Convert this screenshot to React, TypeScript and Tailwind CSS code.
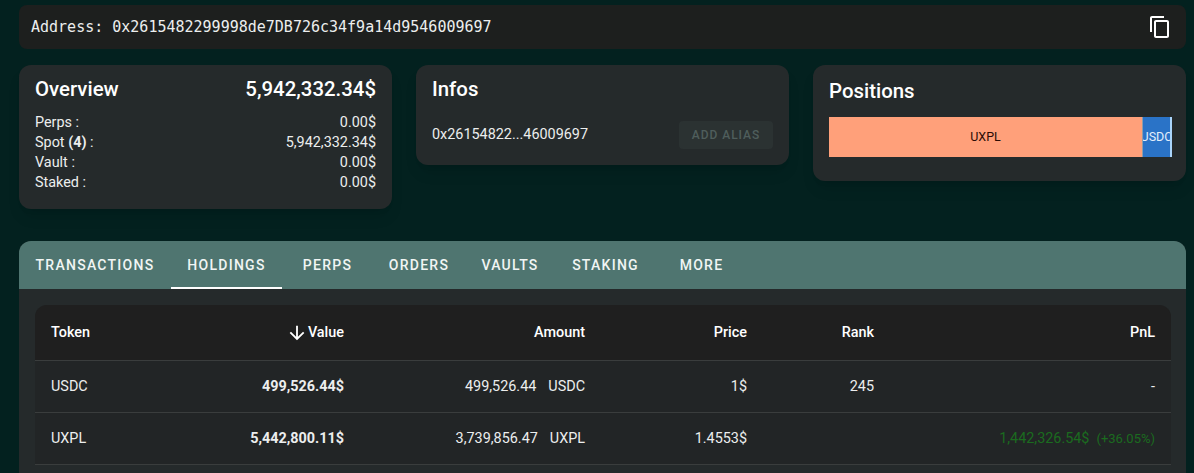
const cols = 'grid grid-cols-[120px_205px_241px_162px_127px_281px]';

const tabs = [
  { label: 'TRANSACTIONS', cls: 'w-[152px]' },
  { label: 'HOLDINGS', cls: 'w-[111px]' },
  { label: 'PERPS', cls: 'w-[91px]' },
  { label: 'ORDERS', cls: 'w-[92px]' },
  { label: 'VAULTS', cls: 'w-[90px]' },
  { label: 'STAKING', cls: 'w-[101px]' },
  { label: 'MORE', cls: 'w-[91px]' },
];

const overviewRows = [
  { id: 'perps', label: <>Perps :</>, value: '0.00$' },
  { id: 'spot', label: <>Spot <b className="font-bold">(4)</b> :</>, value: '5,942,332.34$' },
  { id: 'vault', label: <>Vault :</>, value: '0.00$' },
  { id: 'staked', label: <>Staked :</>, value: '0.00$' },
];

const CopyIcon = () => (
  <svg viewBox="0 0 24 24" className="w-6 h-6 fill-white">
    <path d="M16 1H4c-1.1 0-2 .9-2 2v14h2V3h12V1zm3 4H8c-1.1 0-2 .9-2 2v14c0 1.1.9 2 2 2h11c1.1 0 2-.9 2-2V7c0-1.1-.9-2-2-2zm0 16H8V7h11v14z" />
  </svg>
);

const ArrowDown = () => (
  <svg viewBox="0 0 24 24" className="w-[22px] h-[22px] fill-white">
    <path d="M20 12l-1.41-1.41L13 16.17V4h-2v12.17l-5.58-5.59L4 12l8 8 8-8z" />
  </svg>
);

const Th = ({ children }: { children: React.ReactNode }) => (
  <div className="px-4 flex items-center justify-end text-[14.4px] font-medium text-white">{children}</div>
);

const Td = ({ children, bold }: { children?: React.ReactNode; bold?: boolean }) => (
  <div className={`px-4 flex items-center justify-end text-[14.4px] text-[#eceeee] ${bold ? 'font-bold' : ''}`}>
    {children}
  </div>
);

export default function App() {
  return (
    <div className="h-screen overflow-hidden bg-[#03211f] pl-[19px] pr-2 pt-[5px] font-['Roboto',sans-serif] text-white flex flex-col">
      <div className="h-11 shrink-0 rounded-lg bg-[#1d1f1e] pl-3 pr-[14px] flex items-center justify-between">
        <span className="font-['DejaVu_Sans_Mono',monospace] text-[15px] text-[#eceeee]">
          Address: 0x2615482299998de7DB726c34f9a14d9546009697
        </span>
        <CopyIcon />
      </div>

      <div className="mt-4 flex items-start gap-6 shrink-0">
        <section className="w-[373px] h-36 rounded-xl bg-[#252a2b] px-4 pt-3 shadow-lg">
          <div className="flex justify-between text-[20.4px] leading-6 font-medium">
            <h2>Overview</h2>
            <span>5,942,332.34$</span>
          </div>
          <div className="mt-3 text-[14.4px] leading-5 text-[#eceeee]">
            {overviewRows.map((row) => (
              <div key={row.id} className="flex justify-between">
                <span>{row.label}</span>
                <span>{row.value}</span>
              </div>
            ))}
          </div>
        </section>

        <section className="w-[373px] h-[100px] rounded-xl bg-[#252a2b] px-4 pt-3 shadow-lg">
          <h2 className="text-[20.4px] leading-6 font-medium">Infos</h2>
          <div className="mt-5 flex items-center justify-between">
            <span className="text-[14.4px] text-[#eceeee]">0x26154822...46009697</span>
            <span className="h-7 w-[94px] rounded bg-[#2b3232] flex items-center justify-center text-xs font-medium tracking-[0.08em] text-[#4f5e5c]">
              ADD ALIAS
            </span>
          </div>
        </section>

        <section className="w-[373px] h-[116px] rounded-xl bg-[#252a2b] px-4 pt-[14px] shadow-lg">
          <h2 className="text-[20.4px] leading-6 font-medium">Positions</h2>
          <div className="mt-[14px] h-10 w-[343px] flex text-[12.5px]">
            <div className="w-[313px] bg-[#ffa07a] text-[#2a0b05] flex items-center justify-center">UXPL</div>
            <div className="w-px bg-[#8f9ca8]" />
            <div className="w-[27px] bg-[#2a73c7] text-[#e3eefb] flex items-center justify-center overflow-hidden whitespace-nowrap">
              <span className="shrink-0">USDC</span>
            </div>
            <div className="w-[2px] bg-[#a9d4fa]" />
          </div>
        </section>
      </div>

      <section className="mt-8 flex-1 rounded-t-xl bg-[#252a2b]">
        <nav className="h-12 rounded-t-xl bg-[#4f7570] flex">
          {tabs.map((tab, i) => (
            <div
              key={tab.label}
              className={`${tab.cls} ${i === 1 ? 'border-b-2 border-white pt-[2px]' : ''} h-12 flex items-center justify-center text-sm font-medium tracking-[0.09em] text-[#f1f5f4]`}
            >
              {tab.label}
            </div>
          ))}
        </nav>
        <div className="mx-4 mt-4 rounded-t-xl bg-[#222526] w-[1136px]">
          <div className={`${cols} h-14 rounded-t-xl bg-[#1f1f1f] border-b border-[#3a3d3d]`}>
            <div className="px-4 flex items-center text-[14.4px] font-medium">Token</div>
            <Th><ArrowDown />Value</Th>
            <Th>Amount</Th>
            <Th>Price</Th>
            <Th>Rank</Th>
            <Th>PnL</Th>
          </div>
          <div className={`${cols} h-[52px] border-b border-[#3a3d3d]`}>
            <div className="px-4 flex items-center text-[14.4px] text-[#eceeee]">USDC</div>
            <Td bold>499,526.44$</Td>
            <Td><span>499,526.44</span><span className="ml-3">USDC</span></Td>
            <Td>1$</Td>
            <Td>245</Td>
            <Td>-</Td>
          </div>
          <div className={`${cols} h-[52px] border-b border-[#3a3d3d]`}>
            <div className="px-4 flex items-center text-[14.4px] text-[#eceeee]">UXPL</div>
            <Td bold>5,442,800.11$</Td>
            <Td><span>3,739,856.47</span><span className="ml-3">UXPL</span></Td>
            <Td>1.4553$</Td>
            <Td />
            <Td>
              <span className="text-[#1b6b1f]">1,442,326.54$</span>
              <span className="ml-[7px] text-[13px] text-[#1b6b1f]">(+36.05%)</span>
            </Td>
          </div>
        </div>
      </section>
    </div>
  );
}
